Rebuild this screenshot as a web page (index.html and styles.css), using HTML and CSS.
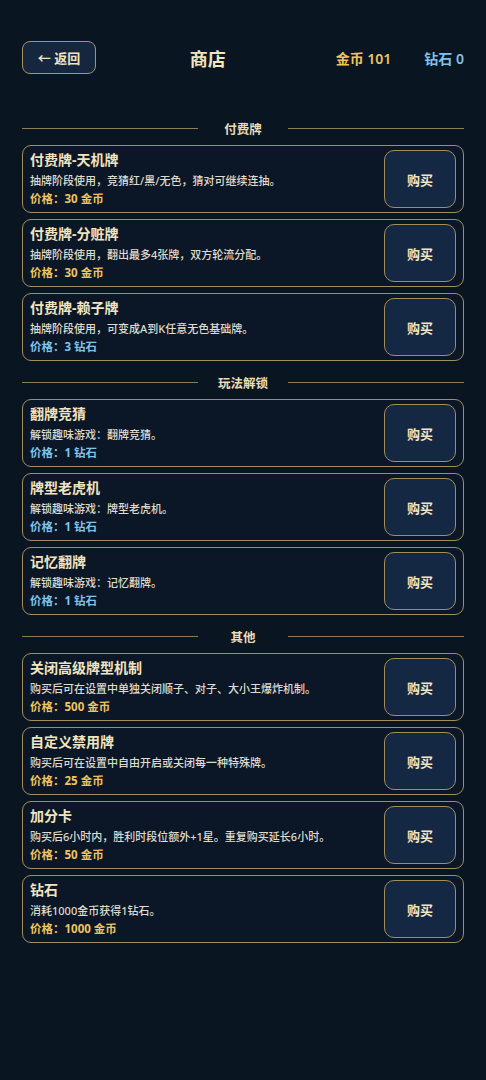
FILE: index.html
```html
<!DOCTYPE html>
<html lang="zh-CN">
<head>
    <meta charset="UTF-8">
    <meta name="viewport" content="width=device-width, initial-scale=1.0">
    <title>商店</title>
    <link rel="stylesheet" href="styles.css">
</head>
<body>
<div class="shop">
    <!-- Top bar -->
    <div class="topbar">
        <button class="back-btn">← 返回</button>
        <div class="title">商店</div>
        <div class="wallet">
            <span class="coin">金币 101</span>
            <span class="gem">钻石 0</span>
        </div>
    </div>

    <div class="list">
        <div class="divider"><span></span><b>付费牌</b><span></span></div>

        <div class="item">
            <div class="info">
                <div class="name">付费牌-天机牌</div>
                <div class="desc">抽牌阶段使用，竞猜红/黑/无色，猜对可继续连抽。</div>
                <div class="price coin">价格：30 金币</div>
            </div>
            <button class="buy-btn">购买</button>
        </div>
        <div class="item">
            <div class="info">
                <div class="name">付费牌-分赃牌</div>
                <div class="desc">抽牌阶段使用，翻出最多4张牌，双方轮流分配。</div>
                <div class="price coin">价格：30 金币</div>
            </div>
            <button class="buy-btn">购买</button>
        </div>
        <div class="item">
            <div class="info">
                <div class="name">付费牌-赖子牌</div>
                <div class="desc">抽牌阶段使用，可变成A到K任意无色基础牌。</div>
                <div class="price gem">价格：3 钻石</div>
            </div>
            <button class="buy-btn">购买</button>
        </div>

        <div class="divider"><span></span><b>玩法解锁</b><span></span></div>

        <div class="item">
            <div class="info">
                <div class="name">翻牌竞猜</div>
                <div class="desc">解锁趣味游戏：翻牌竞猜。</div>
                <div class="price gem">价格：1 钻石</div>
            </div>
            <button class="buy-btn">购买</button>
        </div>
        <div class="item">
            <div class="info">
                <div class="name">牌型老虎机</div>
                <div class="desc">解锁趣味游戏：牌型老虎机。</div>
                <div class="price gem">价格：1 钻石</div>
            </div>
            <button class="buy-btn">购买</button>
        </div>
        <div class="item">
            <div class="info">
                <div class="name">记忆翻牌</div>
                <div class="desc">解锁趣味游戏：记忆翻牌。</div>
                <div class="price gem">价格：1 钻石</div>
            </div>
            <button class="buy-btn">购买</button>
        </div>

        <div class="divider"><span></span><b>其他</b><span></span></div>

        <div class="item">
            <div class="info">
                <div class="name">关闭高级牌型机制</div>
                <div class="desc">购买后可在设置中单独关闭顺子、对子、大小王爆炸机制。</div>
                <div class="price coin">价格：500 金币</div>
            </div>
            <button class="buy-btn">购买</button>
        </div>
        <div class="item">
            <div class="info">
                <div class="name">自定义禁用牌</div>
                <div class="desc">购买后可在设置中自由开启或关闭每一种特殊牌。</div>
                <div class="price coin">价格：25 金币</div>
            </div>
            <button class="buy-btn">购买</button>
        </div>
        <div class="item">
            <div class="info">
                <div class="name">加分卡</div>
                <div class="desc">购买后6小时内，胜利时段位额外+1星。重复购买延长6小时。</div>
                <div class="price coin">价格：50 金币</div>
            </div>
            <button class="buy-btn">购买</button>
        </div>
        <div class="item">
            <div class="info">
                <div class="name">钻石</div>
                <div class="desc">消耗1000金币获得1钻石。</div>
                <div class="price coin">价格：1000 金币</div>
            </div>
            <button class="buy-btn">购买</button>
        </div>
    </div>
</div>
</body>
</html>
```

FILE: styles.css
```css
body {
    margin: 0;
    background-color: #0a1522;
    font-family: "Noto Sans", "Noto Sans CJK SC", sans-serif;
    color: #f1e4c0;
}
.shop {
    padding: 41px 22px 40px;
}
.topbar {
    display: flex;
    align-items: center;
    height: 33px;
}
.back-btn {
    width: 74px;
    height: 33px;
    background-color: #15263e;
    border: 1px solid #a8935f;
    border-radius: 8px;
    color: #f1e4c0;
    font-family: inherit;
    font-size: 13px;
    font-weight: 700;
    padding: 0;
}
.title {
    flex: 1;
    text-align: center;
    padding-right: 16px;
    font-size: 18px;
    font-weight: 700;
}
.wallet {
    display: flex;
    gap: 33px;
    font-size: 14px;
    font-weight: 600;
}
.coin {
    color: #efc45f;
}
.gem {
    color: #7ec3ec;
}
.list {
    margin-top: 39px;
    display: flex;
    flex-direction: column;
    gap: 6px;
}
.divider {
    display: grid;
    grid-template-columns: 1fr 90px 1fr;
    align-items: center;
    height: 16px;
    padding: 6px 0 4px;
}
.divider span {
    height: 1px;
    background-color: #8e7d54;
}
.divider b {
    text-align: center;
    font-size: 12.5px;
    font-weight: 700;
    color: #e9dcb6;
}
.item {
    display: flex;
    gap: 8px;
    padding: 4px 7px 4px 7px;
    border: 1px solid #a38d5a;
    border-radius: 9px;
    background-color: #0b1726;
}
.info {
    flex: 1;
}
.name {
    font-size: 14px;
    font-weight: 700;
    line-height: 20px;
}
.desc {
    margin-top: 2px;
    font-size: 11px;
    font-weight: 500;
    line-height: 18px;
    color: #dfdbcf;
}
.price {
    font-size: 11.5px;
    font-weight: 700;
    line-height: 18px;
}
.buy-btn {
    width: 72px;
    background-color: #142844;
    border: 1px solid #a38d5a;
    border-radius: 10px;
    color: #f1e4c0;
    font-family: inherit;
    font-size: 13px;
    font-weight: 700;
    padding: 0;
}
```
